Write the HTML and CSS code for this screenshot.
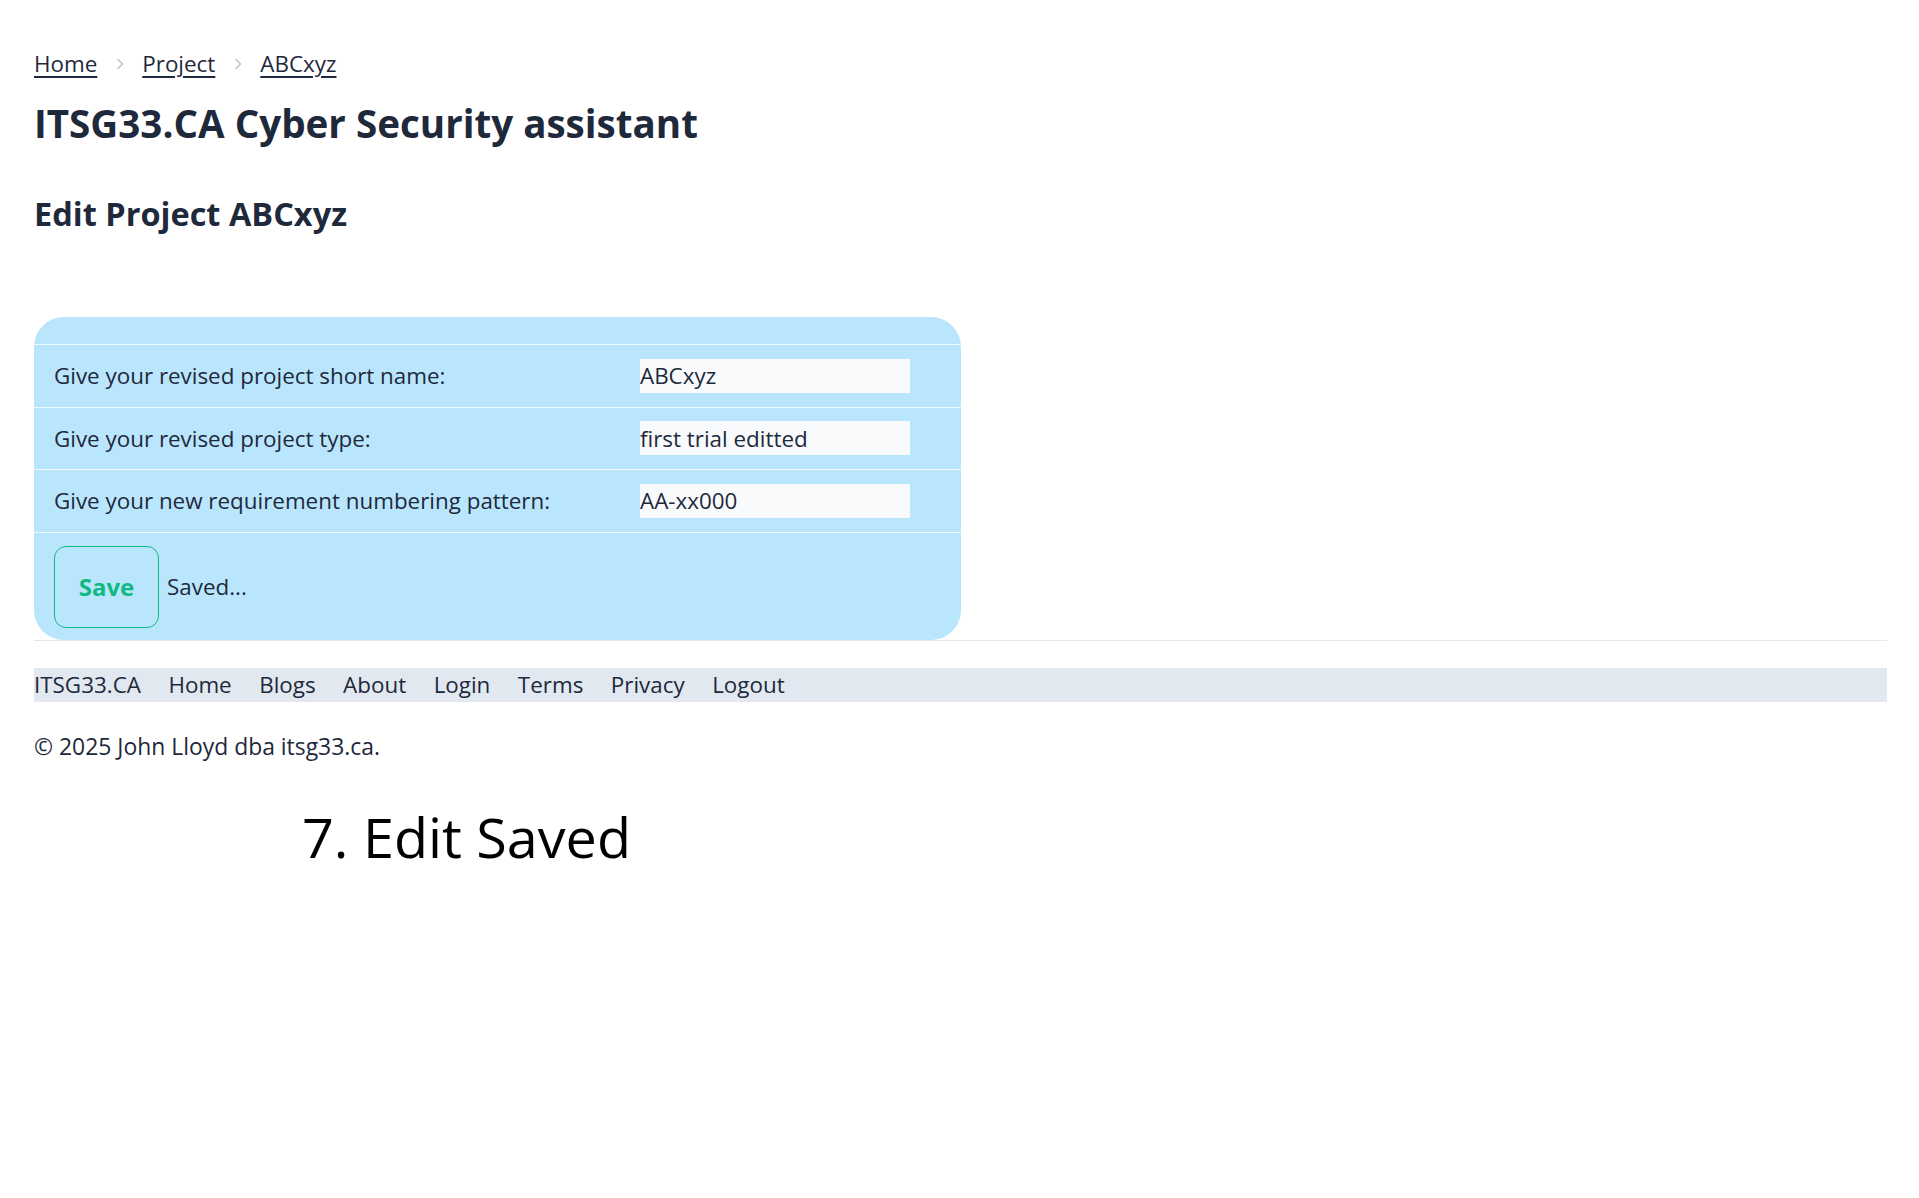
FILE: index.html
```html
<!DOCTYPE html>
<html lang="en">
<head>
<meta charset="utf-8">
<title>Edit Project ABCxyz</title>
<link rel="stylesheet" href="styles.css">
</head>
<body>
<div class="page">
  <nav class="crumbs">
    <a href="#">Home</a>
    <svg class="chev" viewBox="0 0 8 12" width="8" height="12"><path d="M1.5 1 L6.5 6 L1.5 11" fill="none" stroke="#b9bec6" stroke-width="1.4"/></svg>
    <a href="#">Project</a>
    <svg class="chev" viewBox="0 0 8 12" width="8" height="12"><path d="M1.5 1 L6.5 6 L1.5 11" fill="none" stroke="#b9bec6" stroke-width="1.4"/></svg>
    <a href="#">ABCxyz</a>
  </nav>
  <h1 class="title">ITSG33.CA Cyber Security assistant</h1>
  <h2 class="subtitle">Edit Project ABCxyz</h2>

  <form class="card">
    <div class="card-head"></div>
    <div class="row">
      <label class="label">Give your revised project short name:</label>
      <input class="field" type="text" value="ABCxyz">
    </div>
    <div class="row">
      <label class="label">Give your revised project type:</label>
      <input class="field" type="text" value="first trial editted">
    </div>
    <div class="row">
      <label class="label">Give your new requirement numbering pattern:</label>
      <input class="field" type="text" value="AA-xx000">
    </div>
    <div class="actions">
      <button class="save" type="button">Save</button>
      <span class="status">Saved...</span>
    </div>
  </form>

  <footer class="footer">
    <nav class="footnav">
      <a href="#">ITSG33.CA</a>
      <a href="#">Home</a>
      <a href="#">Blogs</a>
      <a href="#">About</a>
      <a href="#">Login</a>
      <a href="#">Terms</a>
      <a href="#">Privacy</a>
      <a href="#">Logout</a>
    </nav>
    <p class="copy">© 2025 John Lloyd dba itsg33.ca.</p>
  </footer>

  <p class="caption">7. Edit Saved</p>
</div>
</body>
</html>
```

FILE: styles.css
```css
* { box-sizing: border-box; }

html, body {
  margin: 0;
  padding: 0;
  background: #ffffff;
}

body {
  font-family: "Open Sans", "Noto Sans", "DejaVu Sans", sans-serif;
  font-size: 22.4px;
  color: #1e293b;
}

.page {
  padding: 0 32px 0 34px;
}

.crumbs {
  display: flex;
  align-items: center;
  gap: 18.5px;
  height: 36px;
  margin-top: 46px;
}

.crumbs a {
  color: #1e293b;
  text-decoration: underline;
  text-underline-offset: 4px;
  text-decoration-thickness: 1.5px;
  line-height: 36px;
}

.chev {
  display: block;
  flex: none;
}

.title {
  margin: 19px 0 0;
  font-size: 38.6px;
  font-weight: 700;
  line-height: 45px;
  color: #1e293b;
}

.subtitle {
  margin: 48px 0 0;
  font-size: 32.5px;
  font-weight: 700;
  line-height: 40px;
  color: #1e293b;
}

.card {
  margin-top: 83px;
  width: 927px;
  background: #bae6fd;
  border-radius: 30px;
}

.card-head {
  height: 27px;
}

.row {
  display: grid;
  grid-template-columns: 586px 270px;
  align-items: center;
  height: 62.5px;
  padding-left: 20px;
  border-top: 1.5px solid #eef8fe;
}

.label {
  color: #1e293b;
}

.field {
  width: 270px;
  height: 34px;
  border: none;
  padding: 0;
  margin: 0;
  background: #f8fafc;
  font: inherit;
  color: #1e293b;
  outline: none;
}

.actions {
  display: flex;
  align-items: center;
  gap: 8px;
  padding: 13px 20px 12px;
  border-top: 1.5px solid #eef8fe;
}

.save {
  width: 105px;
  height: 82px;
  border: 1.5px solid #10b981;
  border-radius: 12px;
  background: transparent;
  font: inherit;
  font-size: 24px;
  font-weight: 700;
  color: #10b981;
  padding: 0;
}

.status {
  color: #1e293b;
}

.footer {
  border-top: 1.5px solid #e5e7eb;
  padding-top: 27px;
}

.footnav {
  display: flex;
  gap: 27.5px;
  height: 34px;
  align-items: center;
  background: #e2e8f0;
}

.footnav a {
  color: #1e293b;
  text-decoration: none;
  line-height: 34px;
}

.copy {
  margin: 27px 0 0;
  font-size: 22.9px;
  line-height: 36px;
}

.caption {
  margin: 34px 0 0 268px;
  font-size: 55.7px;
  line-height: 74px;
  color: #000000;
}
```
